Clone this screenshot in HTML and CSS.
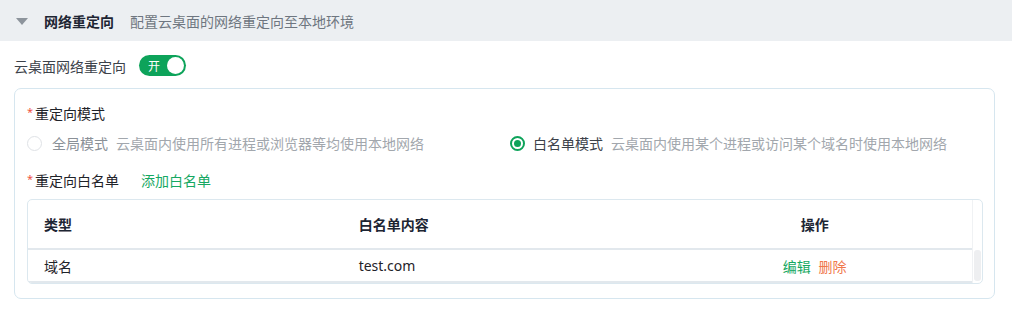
FILE: index.html
```html
<!DOCTYPE html>
<html lang="zh-CN">
<head>
  <meta charset="UTF-8" />
  <title>网络重定向</title>
  <link rel="stylesheet" href="styles.css">
</head>
<body>
  <div class="panel">
    <!-- Section header -->
    <div class="panel-header">
      <span class="caret"></span>
      <span class="panel-title">网络重定向</span>
      <span class="panel-desc">配置云桌面的网络重定向至本地环境</span>
    </div>

    <div class="switch-row">
      <span class="switch-label">云桌面网络重定向</span>
      <div class="switch on">
        <span class="switch-text">开</span>
        <span class="switch-knob"></span>
      </div>
    </div>

    <div class="config-box">
      <div class="field-label"><span class="req">*</span>重定向模式</div>

      <div class="radio-group">
        <label class="radio">
          <span class="radio-dot"></span>
          <span class="radio-name">全局模式</span>
          <span class="radio-desc">云桌面内使用所有进程或浏览器等均使用本地网络</span>
        </label>
        <label class="radio checked">
          <span class="radio-dot"></span>
          <span class="radio-name">白名单模式</span>
          <span class="radio-desc">云桌面内使用某个进程或访问某个域名时使用本地网络</span>
        </label>
      </div>

      <div class="field-label whitelist-label">
        <span class="req">*</span>重定向白名单
        <a class="add-link">添加白名单</a>
      </div>

      <div class="table">
        <div class="table-main">
          <div class="tr th">
            <div class="td">类型</div>
            <div class="td">白名单内容</div>
            <div class="td center">操作</div>
          </div>
          <div class="tr">
            <div class="td">域名</div>
            <div class="td">test.com</div>
            <div class="td center">
              <a class="op edit">编辑</a>
              <a class="op del">删除</a>
            </div>
          </div>
        </div>
        <div class="table-gutter">
          <div class="gutter-head"></div>
          <div class="gutter-thumb"></div>
        </div>
      </div>
    </div>
  </div>
</body>
</html>
```

FILE: styles.css
```css
* {
  margin: 0;
  padding: 0;
  box-sizing: border-box;
}

body {
  background: #ffffff;
  font-family: "Noto Sans", "Noto Sans CJK SC", sans-serif;
  font-size: 14px;
  color: #1f2329;
}

.panel {
  width: 1012px;
}

.panel-header {
  height: 41px;
  background: #eceff2;
  display: flex;
  align-items: center;
  padding-left: 16px;
}

.caret {
  width: 0;
  height: 0;
  border-left: 6px solid transparent;
  border-right: 6px solid transparent;
  border-top: 7px solid #8d949c;
  margin-right: 16px;
  margin-top: 1px;
}

.panel-title {
  font-weight: 700;
  color: #1d2533;
  margin-right: 16px;
}

.panel-desc {
  color: #6e7680;
}

.switch-row {
  display: flex;
  align-items: center;
  height: 47px;
  padding: 2px 14px 0;
}

.switch-label {
  color: #3c424a;
  margin-right: 13px;
}

.switch {
  width: 47px;
  height: 21px;
  border-radius: 11px;
  background: #0da35a;
  display: flex;
  align-items: center;
  justify-content: space-between;
  padding: 0 2px 0 9px;
}

.switch-text {
  color: #ffffff;
  font-size: 12px;
}

.switch-knob {
  width: 17px;
  height: 17px;
  border-radius: 50%;
  background: #ffffff;
}

.config-box {
  margin: 0 17px 0 14px;
  border: 1px solid #d6e6ef;
  border-radius: 7px;
  padding: 14px 11px 14px 12px;
}

.field-label {
  display: flex;
  align-items: center;
  color: #1f2329;
  height: 20px;
}

.req {
  color: #f0533f;
  font-size: 11px;
  margin-right: 2px;
  align-self: flex-start;
  margin-top: 1px;
}

.radio-group {
  display: grid;
  grid-template-columns: 483px 1fr;
  height: 40px;
  align-items: center;
}

.radio {
  display: flex;
  align-items: center;
}

.radio-dot {
  width: 15px;
  height: 15px;
  border-radius: 50%;
  border: 1px solid #dfe2e6;
  margin-right: 10px;
  display: flex;
  align-items: center;
  justify-content: center;
}

.radio.checked .radio-dot {
  border: 2px solid #0da35a;
  margin-right: 8px;
}

.radio.checked .radio-dot::after {
  content: "";
  width: 7px;
  height: 7px;
  border-radius: 50%;
  background: #0da35a;
}

.radio-name {
  color: #8a9097;
  margin-right: 8px;
}

.radio.checked .radio-name {
  color: #3c424a;
}

.radio-desc {
  color: #a2a7ad;
}

.whitelist-label {
  margin-top: 7px;
}

.add-link {
  color: #16a862;
  margin-left: 22px;
}

.table {
  margin-top: 9px;
  display: flex;
  border: 1px solid #dce8ef;
  border-radius: 5px;
  overflow: hidden;
}

.table-main {
  flex: 1;
}

.tr {
  display: grid;
  grid-template-columns: 1fr 1fr 1fr;
  height: 33px;
  align-items: center;
  border-bottom: 2px solid #e2e8ed;
}

.tr.th {
  height: 50px;
  font-weight: 700;
  color: #1d2533;
}

.td {
  padding-left: 16px;
}

.td.center {
  text-align: center;
  padding-left: 0;
}

.op {
  margin: 0 2px;
}

.op.edit {
  color: #16a862;
}

.op.del {
  color: #f0774b;
}

.table-gutter {
  width: 10px;
  border-left: 1px solid #f0f2f4;
  display: flex;
  flex-direction: column;
}

.gutter-head {
  height: 50px;
}

.gutter-thumb {
  height: 31px;
  margin: 0 1px;
  border-radius: 3px;
  background: #eeeff1;
}
```
